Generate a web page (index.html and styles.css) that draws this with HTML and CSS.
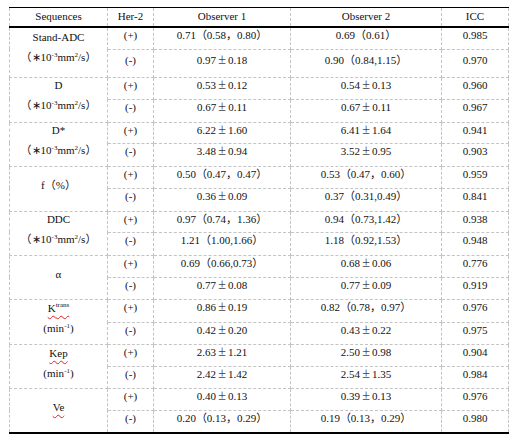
FILE: index.html
```html
<!DOCTYPE html>
<html>
<head>
<meta charset="utf-8">
<link rel="stylesheet" href="styles.css">
</head>
<body>
<div class="page">
<table class="tbl">
<colgroup><col class="c1"><col class="c2"><col class="c3"><col class="c4"><col class="c5"></colgroup>
<thead>
<tr class="hd"><th>Sequences</th><th>Her-2</th><th>Observer 1</th><th>Observer 2</th><th>ICC</th></tr>
</thead>
<tbody>
<tr class="r22"><td rowspan="2" class="seq two p3"><div class="l1">Stand-ADC</div><div class="l2">（∗10<sup>-3</sup>mm<sup>2</sup>/s）</div></td><td>(+)</td><td>0.71（0.58，0.80）</td><td>0.69（0.61）</td><td>0.985</td></tr>
<tr class="r28 p3"><td>(-)</td><td>0.97<span class="pm">±</span>0.18</td><td>0.90（0.84,1.15）</td><td>0.970</td></tr>

<tr class="r22"><td rowspan="2" class="seq two"><div class="l1">D</div><div class="l2">（∗10<sup>-3</sup>mm<sup>2</sup>/s）</div></td><td>(+)</td><td>0.53<span class="pm">±</span>0.12</td><td>0.54<span class="pm">±</span>0.13</td><td>0.960</td></tr>
<tr class="r23"><td>(-)</td><td>0.67<span class="pm">±</span>0.11</td><td>0.67<span class="pm">±</span>0.11</td><td>0.967</td></tr>

<tr class="r21"><td rowspan="2" class="seq two"><div class="l1">D*</div><div class="l2">（∗10<sup>-3</sup>mm<sup>2</sup>/s）</div></td><td>(+)</td><td>6.22<span class="pm">±</span>1.60</td><td>6.41<span class="pm">±</span>1.64</td><td>0.941</td></tr>
<tr class="r23"><td>(-)</td><td>3.48<span class="pm">±</span>0.94</td><td>3.52<span class="pm">±</span>0.95</td><td>0.903</td></tr>

<tr class="r22"><td rowspan="2" class="seq one">f（%）</td><td>(+)</td><td>0.50（0.47，0.47）</td><td>0.53（0.47，0.60）</td><td>0.959</td></tr>
<tr class="r23"><td>(-)</td><td>0.36<span class="pm">±</span>0.09</td><td>0.37（0.31,0.49）</td><td>0.841</td></tr>

<tr class="r21"><td rowspan="2" class="seq two"><div class="l1">DDC</div><div class="l2">（∗10<sup>-3</sup>mm<sup>2</sup>/s）</div></td><td>(+)</td><td>0.97（0.74，1.36）</td><td>0.94（0.73,1.42）</td><td>0.938</td></tr>
<tr class="r23"><td>(-)</td><td>1.21（1.00,1.66）</td><td>1.18（0.92,1.53）</td><td>0.948</td></tr>

<tr class="r22"><td rowspan="2" class="seq one">α</td><td>(+)</td><td>0.69（0.66,0.73）</td><td>0.68<span class="pm">±</span>0.06</td><td>0.776</td></tr>
<tr class="r22"><td>(-)</td><td>0.77<span class="pm">±</span>0.08</td><td>0.77<span class="pm">±</span>0.09</td><td>0.919</td></tr>

<tr class="r23"><td rowspan="2" class="seq two p1"><div class="l1"><span class="sq">K<sup class="tr">trans</sup></span></div><div class="l2">(min<sup>-1</sup>)</div></td><td>(+)</td><td>0.86<span class="pm">±</span>0.19</td><td>0.82（0.78，0.97）</td><td>0.976</td></tr>
<tr class="r22"><td>(-)</td><td>0.42<span class="pm">±</span>0.20</td><td>0.43<span class="pm">±</span>0.22</td><td>0.975</td></tr>

<tr class="r22"><td rowspan="2" class="seq two p1"><div class="l1"><span class="sq">Kep</span></div><div class="l2">(min<sup>-1</sup>)</div></td><td>(+)</td><td>2.63<span class="pm">±</span>1.21</td><td>2.50<span class="pm">±</span>0.98</td><td>0.904</td></tr>
<tr class="r22"><td>(-)</td><td>2.42<span class="pm">±</span>1.42</td><td>2.54<span class="pm">±</span>1.35</td><td>0.984</td></tr>

<tr class="r22"><td rowspan="2" class="seq one last"><span class="sq">Ve</span></td><td>(+)</td><td>0.40<span class="pm">±</span>0.13</td><td>0.39<span class="pm">±</span>0.13</td><td>0.976</td></tr>
<tr class="r23 lastrow"><td>(-)</td><td>0.20（0.13，0.29）</td><td>0.19（0.13，0.29）</td><td>0.980</td></tr>
</tbody>
</table>
</div>
</body>
</html>
```

FILE: styles.css
```css
html, body {
  margin: 0;
  background: #fff;
}
body {
  font-family: "Liberation Serif", "Noto Sans CJK SC", serif;
  font-size: 11px;
  color: #111;
}
.page {
  padding: 7px 0 0 9px;
}
.tbl {
  border-collapse: collapse;
  table-layout: fixed;
  width: 499px;
}
.c1 { width: 98px; }
.c2 { width: 46px; }
.c3 { width: 137px; }
.c4 { width: 151px; }
.c5 { width: 67px; }

.tbl th,
.tbl td {
  border: 1px dashed #c4c4c4;
  padding: 0;
  text-align: center;
  vertical-align: top;
  line-height: 14px;
  font-weight: normal;
  white-space: nowrap;
}
.tbl th {
  border-top: 1px solid #000;
  border-bottom: 2px solid #000;
  height: 18px;
  line-height: 16px;
}
.r21 { height: 21px; }
.r22 { height: 22px; }
.r23 { height: 23px; }
.r28 { height: 28px; }
.p3 td { padding-top: 3px; }
.tbl td.p3 { padding-top: 2px; }
.tbl td.p1 { padding-top: 1px; }

.seq .l2 { margin-top: 6px; }
.tbl td.one { padding-top: 11px; }

.lastrow td,
.tbl td.last {
  border-bottom: 2px solid #000;
}

sup {
  font-size: 7px;
  line-height: 0;
  vertical-align: 4px;
}
sup.tr {
  font-size: 7px;
  vertical-align: 5px;
}
.pm {
  display: inline-block;
  width: 12px;
  text-align: center;
  font-size: 14px;
  line-height: 12px;
  color: #444;
}
.sq {
  text-decoration: underline wavy #e02020;
  text-decoration-thickness: 1px;
  text-underline-offset: 3px;
}
```
